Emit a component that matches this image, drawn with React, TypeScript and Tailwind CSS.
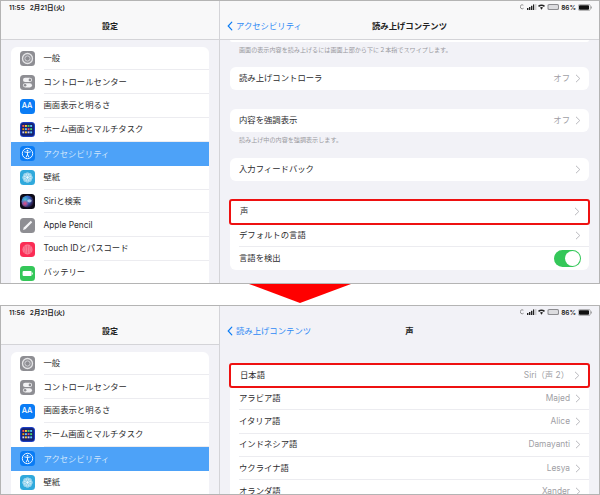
import { ReactNode } from 'react'

const FONT = "font-['Inter','Noto_Sans_CJK_JP',sans-serif]"

function GearIcon() {
  return (
    <svg viewBox="0 0 15 15" className="h-[15px] w-[15px]">
      <rect width="15" height="15" rx="3.5" fill="#8e8e93" />
      <circle cx="7.5" cy="7.5" r="5" fill="none" stroke="#e4e4e6" strokeWidth="1.3" />
      <circle cx="7.5" cy="7.5" r="2.6" fill="none" stroke="#d2d2d6" strokeWidth="1" />
      <circle cx="7.5" cy="7.5" r="3.8" fill="none" stroke="#b5b5b9" strokeWidth="0.7" strokeDasharray="1 1" />
    </svg>
  )
}

function SwitchesIcon() {
  return (
    <svg viewBox="0 0 15 15" className="h-[15px] w-[15px]">
      <rect width="15" height="15" rx="3.5" fill="#8e8e93" />
      <rect x="3" y="2.8" width="9" height="4.2" rx="2.1" fill="#f2f2f4" />
      <circle cx="9.9" cy="4.9" r="1.3" fill="#8e8e93" />
      <rect x="3" y="8.2" width="9" height="4.2" rx="2.1" fill="#f2f2f4" />
      <circle cx="5.1" cy="10.3" r="1.3" fill="#8e8e93" />
    </svg>
  )
}

function DisplayIcon() {
  return (
    <div className="flex h-[15px] w-[15px] items-center justify-center rounded-[3.5px] bg-[#0a7cf5] text-[7.5px] font-medium leading-none text-white">
      AA
    </div>
  )
}

function HomeIcon() {
  const colors = ['#ff5a52', '#ffcc33', '#4cd964', '#5ac8fa', '#ff9500', '#5ac8fa', '#ff5a52', '#4cd964', '#d0d4ff', '#ffcc33', '#d0d4ff', '#5ac8fa']
  return (
    <svg viewBox="0 0 15 15" className="h-[15px] w-[15px]">
      <rect width="15" height="15" rx="3.5" fill="#1c3fc4" />
      <rect x="1.2" y="1.2" width="12.6" height="12.6" rx="1.5" fill="#14206e" />
      {colors.map((c, i) => (
        <rect key={i} x={2.4 + (i % 4) * 2.6} y={3 + Math.floor(i / 4) * 3.2} width="1.9" height="1.9" fill={c} />
      ))}
    </svg>
  )
}

function AccessIcon() {
  return (
    <svg viewBox="0 0 15 15" className="h-[15px] w-[15px]">
      <rect width="15" height="15" rx="3.5" fill="#0a7cf5" />
      <circle cx="7.5" cy="7.5" r="5.2" fill="none" stroke="#fff" strokeWidth="0.9" />
      <circle cx="7.5" cy="4.7" r="0.9" fill="#fff" />
      <path d="M4.7 5.9 L7.5 6.5 L10.3 5.9 M7.5 6.5 V8.4 M7.5 8.4 L6.2 11 M7.5 8.4 L8.8 11" fill="none" stroke="#fff" strokeWidth="0.9" strokeLinecap="round" />
    </svg>
  )
}

function WallpaperIcon() {
  return (
    <svg viewBox="0 0 15 15" className="h-[15px] w-[15px]">
      <rect width="15" height="15" rx="3.5" fill="#30a9dc" />
      {[0, 45, 90, 135, 180, 225, 270, 315].map((a) => (
        <circle key={a} cx="7.5" cy="4.1" r="1.9" fill="#ffffff" fillOpacity="0.5" transform={`rotate(${a} 7.5 7.5)`} />
      ))}
      <circle cx="7.5" cy="7.5" r="1.4" fill="#e7f7fd" />
    </svg>
  )
}

function SiriIcon() {
  return (
    <svg viewBox="0 0 15 15" className="h-[15px] w-[15px]">
      <defs>
        <radialGradient id="siri-a" cx="0.3" cy="0.35" r="0.7">
          <stop offset="0" stopColor="#49c6d8" />
          <stop offset="0.55" stopColor="#3a62c4" />
          <stop offset="1" stopColor="#2a1840" />
        </radialGradient>
        <radialGradient id="siri-b" cx="0.5" cy="0.5" r="0.5">
          <stop offset="0" stopColor="#e8497f" />
          <stop offset="1" stopColor="#e8497f" stopOpacity="0" />
        </radialGradient>
      </defs>
      <rect width="15" height="15" rx="3.5" fill="#0d0b18" />
      <circle cx="7.5" cy="7.5" r="6" fill="url(#siri-a)" />
      <circle cx="5" cy="9.5" r="3.8" fill="url(#siri-b)" />
      <ellipse cx="9.5" cy="6.8" rx="2.2" ry="1.6" fill="#d7e4f7" fillOpacity="0.7" />
    </svg>
  )
}

function PencilIcon() {
  return (
    <svg viewBox="0 0 15 15" className="h-[15px] w-[15px]">
      <rect width="15" height="15" rx="3.5" fill="#8e8e93" />
      <path d="M3 12 L3.8 9.6 L10.8 2.8 L12.2 4.2 L5.4 11.2 Z" fill="#f4f4f6" />
    </svg>
  )
}

function TouchIcon() {
  return (
    <svg viewBox="0 0 15 15" className="h-[15px] w-[15px]">
      <rect width="15" height="15" rx="3.5" fill="#fb2d55" />
      <circle cx="7.5" cy="7.5" r="5" fill="#f98aa0" />
      {[-3, -1.5, 0, 1.5, 3].map((d) => (
        <path key={d} d={`M${7.5 + d} 3.4 Q${7.5 + d * 1.4} 7.5 ${7.5 + d} 11.6`} fill="none" stroke="#fb2d55" strokeWidth="0.5" />
      ))}
    </svg>
  )
}

function BatteryAppIcon() {
  return (
    <svg viewBox="0 0 15 15" className="h-[15px] w-[15px]">
      <rect width="15" height="15" rx="3.5" fill="#34c759" />
      <rect x="2.6" y="5" width="9" height="5" rx="1" fill="#fff" />
      <rect x="11.9" y="6.4" width="0.9" height="2.2" rx="0.4" fill="#fff" />
    </svg>
  )
}

const sidebarItems = [
  { label: '一般', icon: <GearIcon /> },
  { label: 'コントロールセンター', icon: <SwitchesIcon /> },
  { label: '画面表示と明るさ', icon: <DisplayIcon /> },
  { label: 'ホーム画面とマルチタスク', icon: <HomeIcon /> },
  { label: 'アクセシビリティ', icon: <AccessIcon />, selected: true },
  { label: '壁紙', icon: <WallpaperIcon /> },
  { label: 'Siriと検索', icon: <SiriIcon /> },
  { label: 'Apple Pencil', icon: <PencilIcon /> },
  { label: 'Touch IDとパスコード', icon: <TouchIcon /> },
  { label: 'バッテリー', icon: <BatteryAppIcon /> },
]

function Sidebar({ time }: { time: string }) {
  return (
    <div className="flex h-full w-[219px] shrink-0 flex-col overflow-hidden border-r border-[#d4d4d8] bg-[#f2f2f7]">
      <div className="h-[39px] shrink-0 border-b border-[#d4d4d8] bg-[#f8f8f9]">
        <div className="flex h-[10px] items-end gap-[5px] pl-[8px] text-[6.5px] font-semibold leading-none text-[#222]">
          <span>{time}</span>
          <span>2月21日(火)</span>
        </div>
        <div className="mt-[9px] text-center text-[8px] font-semibold leading-[12px] text-[#222]">設定</div>
      </div>
      <div className="mx-[10px] mt-[6.5px] overflow-hidden rounded-t-[6px] bg-white">
        {sidebarItems.map((item) => (
          <div
            key={item.label}
            className={`flex h-[23.85px] items-center pl-[8.5px] ${item.selected ? 'bg-[#4da2f8]' : ''}`}
          >
            {item.icon}
            <div
              className={`ml-[9px] flex h-full flex-1 items-center text-[8.35px] ${
                item.selected ? 'text-[#cfe4fb]' : 'border-b border-[#ececf0] text-[#2c2c2e]'
              }`}
            >
              {item.label}
            </div>
          </div>
        ))}
      </div>
    </div>
  )
}

function StatusIcons() {
  return (
    <div className="flex h-[10px] items-end justify-end gap-[1px] pr-[7px] text-[6.5px] font-semibold leading-none text-[#222]">
      <svg viewBox="0 0 40 8" className="h-[8px] w-[40px]">
        <path d="M3.4 2.2 A2 2 0 1 0 3.6 5.2" fill="none" stroke="#666" strokeWidth="0.7" />
        <rect x="7" y="5" width="1.4" height="2" fill="#222" />
        <rect x="9" y="4" width="1.4" height="3" fill="#222" />
        <rect x="11" y="2.8" width="1.4" height="4.2" fill="#222" />
        <rect x="13" y="1.4" width="1.2" height="5.6" fill="#222" />
        <rect x="15.6" y="1" width="0.6" height="6" fill="#999" />
        <path d="M18 2.8 Q21.5 0 25 2.8 L24 3.9 Q21.5 2 19 3.9 Z M20 4.6 Q21.5 3.4 23 4.6 L21.5 6.8 Z" fill="#222" />
        <rect x="27.5" y="1" width="11.5" height="6" rx="1.6" fill="#8c8c90" />
        <rect x="28.5" y="2" width="9.5" height="4" rx="1" fill="#dcdcdf" />
      </svg>
      <span>86%</span>
      <svg viewBox="0 0 14 7" className="ml-[1px] h-[7px] w-[14px]">
        <rect x="0.3" y="0.5" width="12" height="6" rx="1.4" fill="none" stroke="#777" strokeWidth="0.5" />
        <rect x="1" y="1.2" width="10" height="4.6" rx="0.8" fill="#111" />
        <rect x="12.8" y="2.5" width="0.8" height="2" fill="#777" />
      </svg>
    </div>
  )
}

function Chevron() {
  return (
    <svg viewBox="0 0 6 9" className="ml-[5px] h-[9px] w-[6px] shrink-0">
      <path d="M1 0.8 L4.8 4.5 L1 8.2" fill="none" stroke="#b8b8bd" strokeWidth="1" />
    </svg>
  )
}

function DetailHeader({ back, title, tinted }: { back: string; title: string; tinted?: boolean }) {
  return (
    <div className={`relative h-[39px] shrink-0 ${tinted ? 'border-b border-[#d4d4d8] bg-[#f8f8f9]' : ''}`}>
      <StatusIcons />
      <div className="mt-[9px] flex items-center pl-[7px] text-[8.35px] leading-[12px] text-[#2f8af5]">
        <svg viewBox="0 0 7 11" className="mr-[3px] h-[10px] w-[6px]">
          <path d="M5.6 1 L1.4 5.5 L5.6 10" fill="none" stroke="#0a7cf5" strokeWidth="1.4" strokeLinecap="round" />
        </svg>
        {back}
      </div>
      <div className="absolute inset-x-0 top-[19px] text-center text-[8.35px] font-semibold leading-[12px] text-[#222]">{title}</div>
    </div>
  )
}

function Row({
  label,
  value,
  chevron = true,
  height = 'h-[23px]',
  divider,
  right,
}: {
  label: string
  value?: string
  chevron?: boolean
  height?: string
  divider?: boolean
  right?: ReactNode
}) {
  return (
    <div className={`${height} pl-[9px]`}>
      <div className={`flex h-full items-center pr-[8px] text-[8.35px] text-[#2c2c2e] ${divider ? 'border-b border-[#ececf0]' : ''}`}>
        <span className="flex-1">{label}</span>
        {value && <span className="text-[#a0a0a5]">{value}</span>}
        {right}
        {chevron && <Chevron />}
      </div>
    </div>
  )
}

function Card({ children, className = '' }: { children?: ReactNode; className?: string }) {
  return <div className={`mx-[10px] rounded-[6px] bg-white ${className}`}>{children}</div>
}

function Highlighted({ children }: { children: ReactNode }) {
  return <div className="-mx-[1px] -my-[0.5px] rounded-[3px] border-2 border-[#ee1111] bg-white">{children}</div>
}

function Footnote({ text, className = '' }: { text: string; className?: string }) {
  return <div className={`px-[19px] text-[6.1px] leading-[10px] text-[#9a9a9f] ${className}`}>{text}</div>
}

function TopDetail() {
  return (
    <div className="flex h-full flex-1 flex-col overflow-hidden bg-[#f2f2f7]">
      <DetailHeader back="アクセシビリティ" title="読み上げコンテンツ" tinted />
      <Card className="h-[2px] rounded-t-none" />
      <Footnote text="画面の表示内容を読み上げるには画面上部から下に２本指でスワイプします。" className="mt-[3px]" />
      <Card className="mt-[12px]">
        <Row label="読み上げコントローラ" value="オフ" />
      </Card>
      <Card className="mt-[19px]">
        <Row label="内容を強調表示" value="オフ" />
      </Card>
      <Footnote text="読み上げ中の内容を強調表示します。" className="mt-[3px]" />
      <Card className="mt-[13px]">
        <Row label="入力フィードバック" />
      </Card>
      <Card className="mt-[18px]">
        <Highlighted>
          <Row label="声" height="h-[22px]" />
        </Highlighted>
        <Row label="デフォルトの言語" divider />
        <Row
          label="言語を検出"
          chevron={false}
          right={
            <div className="flex h-[17px] w-[27px] items-center justify-end rounded-full bg-[#34c759] pr-[1px]">
              <div className="h-[15px] w-[15px] rounded-full bg-white" />
            </div>
          }
        />
      </Card>
    </div>
  )
}

const voices = [
  { label: 'アラビア語', value: 'Majed' },
  { label: 'イタリア語', value: 'Alice' },
  { label: 'インドネシア語', value: 'Damayanti' },
  { label: 'ウクライナ語', value: 'Lesya' },
  { label: 'オランダ語', value: 'Xander' },
]

function BottomDetail() {
  return (
    <div className="flex h-full flex-1 flex-col overflow-hidden bg-[#f2f2f7]">
      <DetailHeader back="読み上げコンテンツ" title="声" />
      <Card className="mt-[18px] rounded-b-none">
        <Highlighted>
          <Row label="日本語" value="Siri（声 2）" height="h-[21px]" />
        </Highlighted>
        {voices.map((v) => (
          <Row key={v.label} label={v.label} value={v.value} height="h-[23.3px]" divider />
        ))}
      </Card>
    </div>
  )
}

export default function App() {
  return (
    <div className={`h-[495px] w-[600px] overflow-hidden bg-white ${FONT}`}>
      <div className="flex h-[284px] overflow-hidden border border-[#b4b4b4]">
        <Sidebar time="11:55" />
        <TopDetail />
      </div>
      <div className="flex h-[21px] justify-center">
        <svg viewBox="0 0 102 19" className="h-[19px] w-[102px]">
          <polygon points="0,0 102,0 51,19" fill="#ff0000" />
        </svg>
      </div>
      <div className="flex h-[190px] overflow-hidden border border-[#b4b4b4]">
        <Sidebar time="11:56" />
        <BottomDetail />
      </div>
    </div>
  )
}
